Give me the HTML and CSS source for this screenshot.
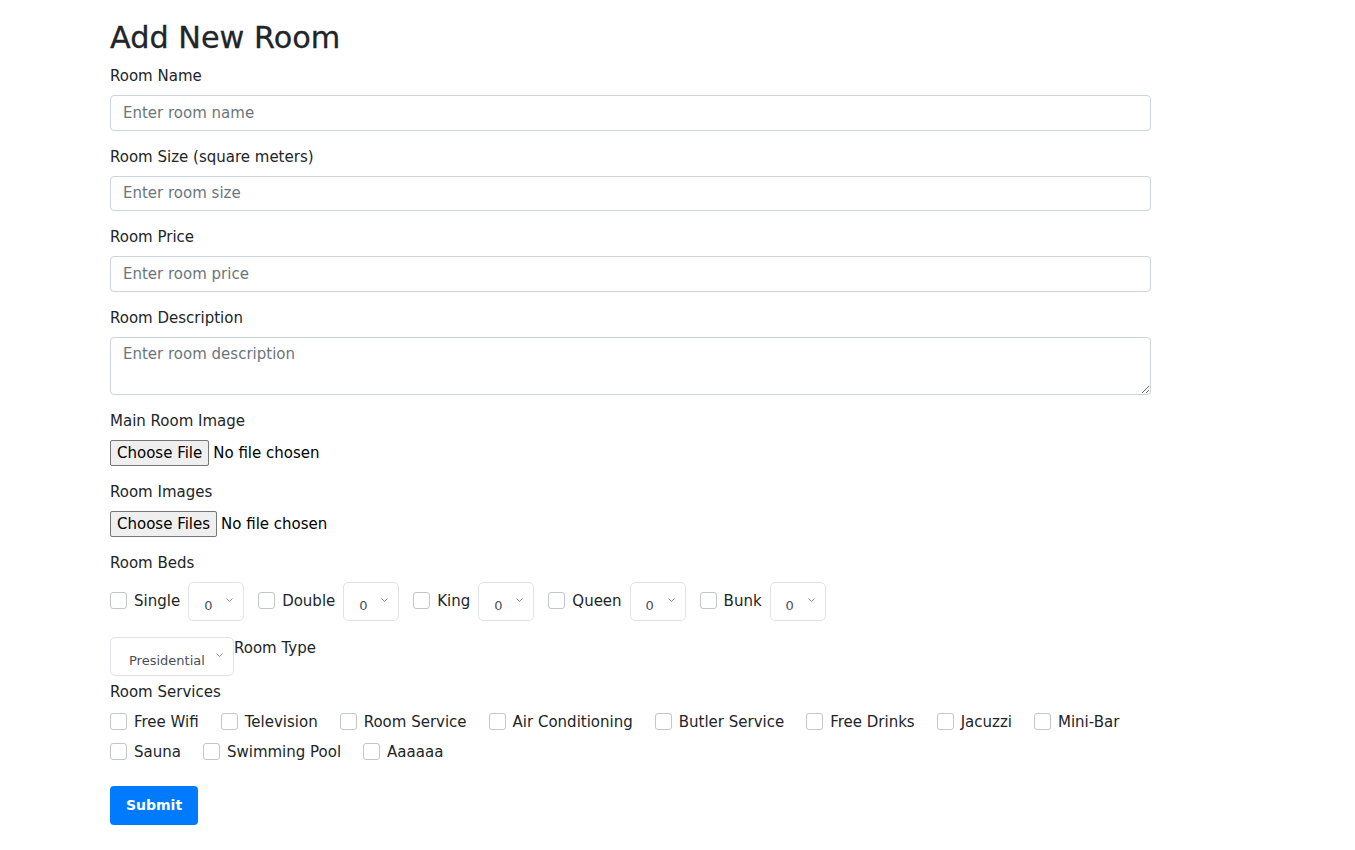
FILE: index.html
```html
<!DOCTYPE html>
<html lang="en">
<head>
<meta charset="utf-8">
<title>Add New Room</title>
<link rel="stylesheet" href="styles.css">
</head>
<body>
<div class="page">
  <h2 class="title">Add New Room</h2>
  <form class="room-form">
    <div class="group">
      <label class="label" for="room-name">Room Name</label>
      <input class="control" id="room-name" type="text" placeholder="Enter room name">
    </div>
    <div class="group">
      <label class="label" for="room-size">Room Size (square meters)</label>
      <input class="control" id="room-size" type="text" placeholder="Enter room size">
    </div>
    <div class="group">
      <label class="label" for="room-price">Room Price</label>
      <input class="control" id="room-price" type="text" placeholder="Enter room price">
    </div>
    <div class="group">
      <label class="label" for="room-desc">Room Description</label>
      <textarea class="control area" id="room-desc" placeholder="Enter room description"></textarea>
    </div>
    <div class="group">
      <label class="label" for="main-img">Main Room Image</label>
      <input class="file" id="main-img" type="file">
    </div>
    <div class="group">
      <label class="label" for="imgs">Room Images</label>
      <input class="file" id="imgs" type="file" multiple>
    </div>
    <div class="group group-beds">
      <label class="label">Room Beds</label>
      <div class="beds">
        <div class="bed">
          <input class="check" type="checkbox" id="bed-single">
          <label class="check-label bed-label" for="bed-single">Single</label>
          <span class="select-wrap"><select class="select bed-select"><option>0</option><option>1</option><option>2</option></select><svg class="chev" width="7" height="4" viewBox="0 0 7 4"><path d="M0.5 0.5 L3.5 3.5 L6.5 0.5" fill="none" stroke="#8a8f94" stroke-width="1"/></svg></span>
        </div>
        <div class="bed">
          <input class="check" type="checkbox" id="bed-double">
          <label class="check-label bed-label" for="bed-double">Double</label>
          <span class="select-wrap"><select class="select bed-select"><option>0</option><option>1</option><option>2</option></select><svg class="chev" width="7" height="4" viewBox="0 0 7 4"><path d="M0.5 0.5 L3.5 3.5 L6.5 0.5" fill="none" stroke="#8a8f94" stroke-width="1"/></svg></span>
        </div>
        <div class="bed">
          <input class="check" type="checkbox" id="bed-king">
          <label class="check-label bed-label" for="bed-king">King</label>
          <span class="select-wrap"><select class="select bed-select"><option>0</option><option>1</option><option>2</option></select><svg class="chev" width="7" height="4" viewBox="0 0 7 4"><path d="M0.5 0.5 L3.5 3.5 L6.5 0.5" fill="none" stroke="#8a8f94" stroke-width="1"/></svg></span>
        </div>
        <div class="bed">
          <input class="check" type="checkbox" id="bed-queen">
          <label class="check-label bed-label" for="bed-queen">Queen</label>
          <span class="select-wrap"><select class="select bed-select"><option>0</option><option>1</option><option>2</option></select><svg class="chev" width="7" height="4" viewBox="0 0 7 4"><path d="M0.5 0.5 L3.5 3.5 L6.5 0.5" fill="none" stroke="#8a8f94" stroke-width="1"/></svg></span>
        </div>
        <div class="bed">
          <input class="check" type="checkbox" id="bed-bunk">
          <label class="check-label bed-label" for="bed-bunk">Bunk</label>
          <span class="select-wrap"><select class="select bed-select"><option>0</option><option>1</option><option>2</option></select><svg class="chev" width="7" height="4" viewBox="0 0 7 4"><path d="M0.5 0.5 L3.5 3.5 L6.5 0.5" fill="none" stroke="#8a8f94" stroke-width="1"/></svg></span>
        </div>
      </div>
    </div>
    <div class="type-row">
      <span class="select-wrap"><select class="select type-select" id="room-type"><option>Presidential</option><option>Deluxe</option><option>Standard</option></select><svg class="chev" width="7" height="4" viewBox="0 0 7 4"><path d="M0.5 0.5 L3.5 3.5 L6.5 0.5" fill="none" stroke="#8a8f94" stroke-width="1"/></svg></span>
      <label class="label type-label" for="room-type">Room Type</label>
    </div>
    <div class="services-group">
      <label class="label">Room Services</label>
      <div class="services">
        <div class="service"><input class="check" type="checkbox" id="s1"><label class="check-label" for="s1">Free Wifi</label></div>
        <div class="service"><input class="check" type="checkbox" id="s2"><label class="check-label" for="s2">Television</label></div>
        <div class="service"><input class="check" type="checkbox" id="s3"><label class="check-label" for="s3">Room Service</label></div>
        <div class="service"><input class="check" type="checkbox" id="s4"><label class="check-label" for="s4">Air Conditioning</label></div>
        <div class="service"><input class="check" type="checkbox" id="s5"><label class="check-label" for="s5">Butler Service</label></div>
        <div class="service"><input class="check" type="checkbox" id="s6"><label class="check-label" for="s6">Free Drinks</label></div>
        <div class="service"><input class="check" type="checkbox" id="s7"><label class="check-label" for="s7">Jacuzzi</label></div>
        <div class="service"><input class="check" type="checkbox" id="s8"><label class="check-label" for="s8">Mini-Bar</label></div>
        <div class="service"><input class="check" type="checkbox" id="s9"><label class="check-label" for="s9">Sauna</label></div>
        <div class="service"><input class="check" type="checkbox" id="s10"><label class="check-label" for="s10">Swimming Pool</label></div>
        <div class="service"><input class="check" type="checkbox" id="s11"><label class="check-label" for="s11">Aaaaaa</label></div>
      </div>
    </div>
    <button class="submit" type="submit">Submit</button>
  </form>
</div>
</body>
</html>
```
FILE: styles.css
```css
* {
  box-sizing: border-box;
}

html, body {
  margin: 0;
  background: #ffffff;
}

body {
  font-family: "DejaVu Sans", "Liberation Sans", sans-serif;
  font-size: 15px;
  line-height: 22.5px;
  color: #212529;
}

.page {
  width: 1041px;
  margin-left: 110px;
  padding-top: 20px;
}

.title {
  margin: 0 0 9px;
  font-size: 30.3px;
  line-height: 36px;
  font-weight: normal;
  color: #212529;
  -webkit-text-stroke: 0.3px #212529;
}

.room-form {
  display: flex;
  flex-direction: column;
}

.group {
  display: flex;
  flex-direction: column;
  align-items: flex-start;
  margin-bottom: 15px;
}

.group-beds {
  margin-bottom: 16px;
}

.label {
  display: block;
  margin-bottom: 7.5px;
  font-size: 15px;
  line-height: 22.5px;
  color: #212529;
}

.control {
  display: block;
  width: 100%;
  height: 35.5px;
  padding: 0 12px;
  border: 1px solid #ced4da;
  border-radius: 4px;
  background: #fff;
  font-family: inherit;
  font-size: 15px;
  color: #495057;
  outline: none;
}

.control::placeholder {
  color: #6c757d;
  opacity: 1;
}

.area {
  height: 58px;
  padding-top: 5px;
  line-height: 22.5px;
  resize: vertical;
}

.file {
  font-family: inherit;
  font-size: 15px;
  color: #000;
  height: 26px;
}

.file::file-selector-button {
  font-family: inherit;
  font-size: 15px;
  color: #000;
  height: 26px;
  padding: 0 6px;
  margin-right: 4px;
  background: #efefef;
  border: 1px solid #767676;
  border-radius: 2px;
}

.beds {
  display: flex;
  align-items: center;
  height: 39px;
}

.bed {
  display: flex;
  align-items: center;
  margin-right: 14px;
}

.check {
  appearance: none;
  -webkit-appearance: none;
  flex: none;
  width: 17px;
  height: 17px;
  margin: 0 7px 0 0;
  border: 1px solid #c3c6c9;
  border-radius: 3px;
  background: #fff;
  position: relative;
  top: -1px;
}

.check-label {
  font-size: 15px;
  line-height: 22.5px;
  color: #212529;
}

.bed-label {
  margin-right: 8px;
}

.select-wrap {
  position: relative;
  display: inline-block;
}

.select {
  appearance: none;
  -webkit-appearance: none;
  display: block;
  height: 39px;
  padding: 13px 26px 3px 15px;
  border: 1px solid #e1e3e6;
  border-radius: 5px;
  background: #fff;
  font-family: inherit;
  font-size: 13px;
  line-height: 19.5px;
  color: #495057;
  outline: none;
}

.bed-select {
  width: 56px;
}

.type-select {
  width: 124px;
  padding-left: 18px;
}

.chev {
  position: absolute;
  right: 11px;
  top: 16px;
  pointer-events: none;
}

.type-row {
  display: flex;
  align-items: flex-start;
  margin-bottom: 5px;
}

.type-label {
  margin: 0;
}

.services-group {
  display: flex;
  flex-direction: column;
}

.services-group .label {
  margin-bottom: 8px;
}

.services {
  display: flex;
  flex-wrap: wrap;
  row-gap: 7.5px;
  width: 1041px;
}

.service {
  display: flex;
  align-items: center;
  margin-right: 22px;
}

.submit {
  align-self: flex-start;
  width: 88px;
  height: 39px;
  margin-top: 22px;
  padding: 0;
  border: none;
  border-radius: 4px;
  background: #007bff;
  color: #fff;
  font-family: inherit;
  font-size: 14px;
  font-weight: bold;
  cursor: pointer;
}
```
